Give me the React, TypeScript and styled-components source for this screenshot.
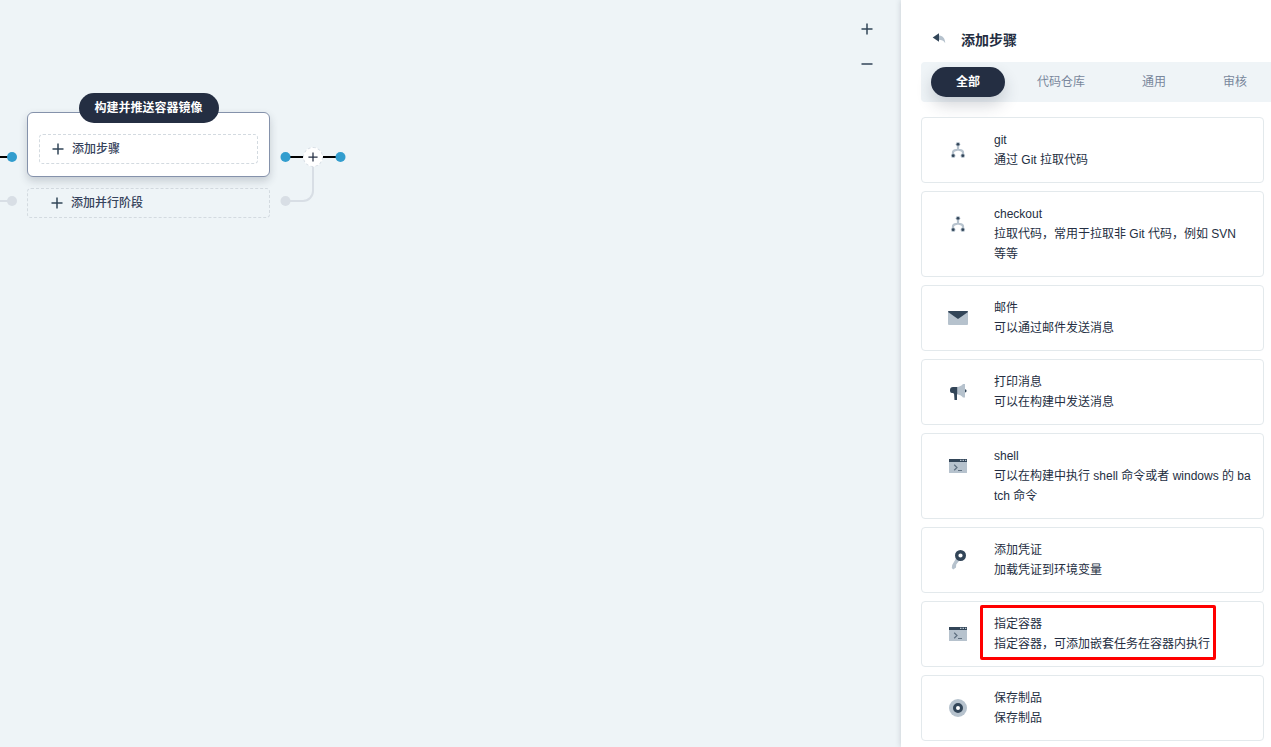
import React from "react";
import styled, { createGlobalStyle, css } from "styled-components";

const color = {
  dark: "#242e42",
  text: "#36435c",
  muted: "#79879c",
  iconDark: "#324558",
  iconLight: "#b6c2cd",
  blue: "#329dce",
  faint: "#d8dee5",
};

const GlobalStyle = createGlobalStyle`
  *, *::before, *::after { box-sizing: border-box; }
  body {
    margin: 0;
    font-family: "Liberation Sans", "Noto Sans CJK SC", sans-serif;
    font-size: 12px;
    line-height: 20px;
    color: ${color.dark};
  }
  button { font: inherit; color: inherit; border: 0; background: none; padding: 0; cursor: pointer; }
  svg { display: block; flex: none; }
`;

const Page = styled.div`
  display: grid;
  grid-template-columns: minmax(0, 1fr) 370px;
  min-height: 100vh;
  overflow: hidden;
`;

/* ---- pipeline canvas ---- */

const Canvas = styled.main`
  position: relative;
  padding-top: 112px;
  background: #eef4f7;
`;

const ZoomControls = styled.div`
  position: absolute;
  top: 19px;
  right: 24px;
  display: flex;
  flex-direction: column;
  gap: 15px;
`;

const ZoomButton = styled.button`
  display: grid;
  place-items: center;
  width: 20px;
  height: 20px;
`;

const StageRow = styled.div`
  display: flex;
  align-items: flex-start;
`;

const StageColumn = styled.div`
  display: flex;
  flex-direction: column;
  gap: 11px;
  width: 243px;
`;

const StageCard = styled.section`
  position: relative;
  padding: 21px 11px 12px;
  border: 1px solid #8592ab;
  border-radius: 6px;
  background: #fff;
  box-shadow: 0 4px 8px rgba(36, 46, 66, 0.2);
`;

const StageName = styled.h2`
  position: absolute;
  top: -20px;
  left: 50%;
  transform: translateX(-50%);
  margin: 0;
  padding: 5px 16px;
  border-radius: 15px;
  background: ${color.dark};
  color: #fff;
  font-size: 12px;
  font-weight: 700;
  line-height: 20px;
  white-space: nowrap;
`;

const DashedButton = styled.button<{ $inset?: boolean }>`
  display: flex;
  align-items: center;
  gap: 8px;
  width: 100%;
  height: 30px;
  padding: 0 ${(p) => (p.$inset ? 12 : 23)}px;
  border: 1px dashed #d3dae0;
  border-radius: 4px;
  color: ${color.text};
  font-weight: 500;
`;

const Connector = styled.div`
  position: relative;
`;

const InsertButton = styled.button`
  position: absolute;
  top: 35px;
  left: 33px;
  display: grid;
  place-items: center;
  width: 20px;
  height: 20px;
  border: 1px dashed #d8dee5;
  border-radius: 50%;
  background: #fff;
`;

/* ---- side panel ---- */

const Panel = styled.aside`
  position: relative;
  min-width: 0;
  padding: 30px 0 5px 20px;
  background: #fff;
  box-shadow: 0 0 6px rgba(36, 46, 66, 0.2);
  overflow: clip;
  overflow-clip-margin: 8px;
`;

const PanelHeader = styled.header`
  display: flex;
  align-items: center;
  gap: 14px;
  height: 20px;
  margin-bottom: 12px;
  padding-left: 10px;
`;

const BackButton = styled.button`
  width: 16px;
  height: 20px;
`;

const PanelTitle = styled.h1`
  margin: 0;
  font-size: 14px;
  font-weight: 700;
  line-height: 20px;
`;

const Tabs = styled.nav`
  display: flex;
  align-items: center;
  gap: 7px;
  height: 40px;
  margin-bottom: 15px;
  padding-left: 10px;
  border-radius: 4px 0 0 4px;
  background: #eff4f7;
`;

const Tab = styled.button<{ $active?: boolean }>`
  flex: none;
  height: 30px;
  padding: 0 25px;
  border-radius: 15px;
  color: ${color.muted};
  ${(p) =>
    p.$active &&
    css`
      background: ${color.dark};
      color: #fff;
      font-weight: 700;
      box-shadow: 0 8px 16px rgba(36, 46, 66, 0.2);
    `}
`;

const StepList = styled.ul`
  display: flex;
  flex-direction: column;
  gap: 8px;
  margin: 0;
  padding: 0 7px 0 0;
  list-style: none;
`;

const StepCard = styled.li`
  position: relative;
  display: flex;
  align-items: flex-start;
  padding: 12px 12px 12px 0;
  border: 1px solid #e3e9ec;
  border-radius: 4px;
  background: #fff;
`;

const StepIcon = styled.div`
  display: grid;
  place-items: center;
  flex: none;
  width: 72px;
  height: 40px;
`;

const StepText = styled.div`
  flex: 1;
  min-width: 0;
  word-break: break-all;
`;

const StepLine = styled.p`
  margin: 0;
`;

const Highlight = styled.div`
  position: absolute;
  top: 3px;
  left: 58px;
  width: 236px;
  height: 55px;
  border: 3px solid #f00;
  border-radius: 2px;
  pointer-events: none;
`;

/* ---- drawings ---- */

const Plus = ({ size = 12, stroke = color.iconDark }: { size?: number; stroke?: string }) => (
  <svg width={size} height={size} viewBox="0 0 12 12" stroke={stroke} strokeWidth="1.5" aria-hidden="true">
    <path d="M6 .5v11M.5 6h11" />
  </svg>
);

const Minus = () => (
  <svg width="12" height="12" viewBox="0 0 12 12" stroke={color.iconDark} strokeWidth="1.5" aria-hidden="true">
    <path d="M.5 6h11" />
  </svg>
);

const BackIcon = () => (
  <svg width="16" height="16" viewBox="0 0 16 16" aria-hidden="true">
    <path d="M7.5 3.400c4 0 6.700 2.600 6.700 7.800-1.500-2.400-3.400-3.400-6.700-3.400z" fill={color.iconLight} />
    <path d="M1.700 5.500 8 1.200v8.600z" fill={color.iconDark} />
  </svg>
);

const GitIcon = () => (
  <svg width="20" height="20" viewBox="0 0 20 20" aria-hidden="true">
    <path d="M10 5v4.500M5 15.500v-3c0-1.500 1-2 2.500-2.300L10 9.500l2.500.7c1.500.3 2.500.8 2.500 2.300v3" fill="none" stroke={color.iconLight} strokeWidth="2.200" />
    {[[10, 4.3], [5.2, 15.7], [14.8, 15.7]].map(([x, y]) => (
      <g key={x}>
        <circle cx={x} cy={y} r="2.300" fill={color.iconLight} />
        <circle cx={x} cy={y} r="1.400" fill={color.iconDark} />
      </g>
    ))}
  </svg>
);

const MailIcon = () => (
  <svg width="20" height="20" viewBox="0 0 20 20" aria-hidden="true">
    <rect y="3" width="20" height="14" rx="1" fill={color.iconLight} />
    <path d="M1 3h18a1 1 0 0 1 1 1l-10 7L0 4a1 1 0 0 1 1-1z" fill={color.iconDark} />
  </svg>
);

const MegaphoneIcon = () => (
  <svg width="20" height="20" viewBox="0 0 20 20" aria-hidden="true">
    <path d="M9 5c2.500-.2 4.500-1.300 6-3h2v13.500h-2c-1.500-1.700-3.500-2.900-6-3.200z" fill={color.iconLight} />
    <path d="M17 7.200a1.600 1.600 0 0 1 0 3.200zM9.200 5v7.300H9V18H6.500l-.4-5.700c-.2-1-.8-1.300-2.100-1.300a2 2 0 0 1-2-2V8c0-2 1-3 3-3z" fill={color.iconDark} />
  </svg>
);

const ShellIcon = () => (
  <svg width="20" height="20" viewBox="0 0 20 20" aria-hidden="true">
    <rect x="1" y="3" width="18" height="14" rx=".5" fill={color.iconLight} />
    <rect x="1" y="3" width="18" height="3" fill={color.iconDark} />
    <path d="M12 3.800h1.500v1.300H12zM14.500 3.800H16v1.300h-1.500zM17 3.800h1.300v1.300H17z" fill={color.iconLight} />
    <path d="m6.200 8.800 2.800 2.700-2.800 2.700M10 14.500h4" fill="none" stroke="#5f7080" strokeWidth="1.200" />
  </svg>
);

const KeyIcon = () => (
  <svg width="20" height="20" viewBox="0 0 20 20" aria-hidden="true">
    <path d="m8 8.500 3 2.500-2.800 3.500-.2 3L5.200 19.500 3.800 18l.4-3z" fill={color.iconLight} />
    <circle cx="12.500" cy="5.500" r="3.800" fill="#fff" stroke={color.iconDark} strokeWidth="3.400" />
  </svg>
);

const DiscIcon = () => (
  <svg width="20" height="20" viewBox="0 0 20 20" aria-hidden="true">
    <circle cx="10" cy="10" r="9" fill={color.iconLight} />
    <circle cx="10" cy="10" r="3.500" fill="#fff" stroke={color.iconDark} strokeWidth="3" />
  </svg>
);

const IncomingLines = () => (
  <svg width="27" height="106" viewBox="0 0 27 106" aria-hidden="true">
    <path d="M0 45h10" stroke="#000" strokeWidth="2" />
    <path d="M0 89h10" stroke={color.faint} strokeWidth="2" />
    <circle cx="12" cy="45" r="5" fill={color.blue} />
    <circle cx="12" cy="89" r="5" fill={color.faint} />
  </svg>
);

const OutgoingLines = () => (
  <svg width="80" height="106" viewBox="0 0 80 106" aria-hidden="true">
    <path d="M15 45h18M53 45h16" stroke="#000" strokeWidth="2" />
    <path d="M43 54v25a10 10 0 0 1-10 10H17" fill="none" stroke={color.faint} strokeWidth="2" />
    <circle cx="15.500" cy="45" r="5" fill={color.blue} />
    <circle cx="70.500" cy="45" r="5" fill={color.blue} />
    <circle cx="15.500" cy="89" r="5" fill={color.faint} />
  </svg>
);

type Step = { title: string; desc: string; Icon: () => React.JSX.Element; highlighted?: boolean };

const steps: Step[] = [
  { title: "git", desc: "通过 Git 拉取代码", Icon: GitIcon },
  { title: "checkout", desc: "拉取代码，常用于拉取非 Git 代码，例如 SVN 等等", Icon: GitIcon },
  { title: "邮件", desc: "可以通过邮件发送消息", Icon: MailIcon },
  { title: "打印消息", desc: "可以在构建中发送消息", Icon: MegaphoneIcon },
  { title: "shell", desc: "可以在构建中执行 shell 命令或者 windows 的 batch 命令", Icon: ShellIcon },
  { title: "添加凭证", desc: "加载凭证到环境变量", Icon: KeyIcon },
  { title: "指定容器", desc: "指定容器，可添加嵌套任务在容器内执行", Icon: ShellIcon, highlighted: true },
  { title: "保存制品", desc: "保存制品", Icon: DiscIcon },
];

const tabs = ["全部", "代码仓库", "通用", "审核"];

export default function App() {
  return (
    <>
      <GlobalStyle />
      <Page lang="zh-CN">
        <Canvas>
          <StageRow>
            <IncomingLines />
            <StageColumn>
              <StageCard>
                <StageName>构建并推送容器镜像</StageName>
                <DashedButton $inset>
                  <Plus />
                  添加步骤
                </DashedButton>
              </StageCard>
              <DashedButton>
                <Plus />
                添加并行阶段
              </DashedButton>
            </StageColumn>
            <Connector>
              <OutgoingLines />
              <InsertButton aria-label="添加阶段">
                <Plus size={10} stroke={color.dark} />
              </InsertButton>
            </Connector>
          </StageRow>
          <ZoomControls>
            <ZoomButton aria-label="放大">
              <Plus />
            </ZoomButton>
            <ZoomButton aria-label="缩小">
              <Minus />
            </ZoomButton>
          </ZoomControls>
        </Canvas>
        <Panel>
          <PanelHeader>
            <BackButton aria-label="返回">
              <BackIcon />
            </BackButton>
            <PanelTitle>添加步骤</PanelTitle>
          </PanelHeader>
          <Tabs>
            {tabs.map((name, i) => (
              <Tab key={name} $active={i === 0}>
                {name}
              </Tab>
            ))}
          </Tabs>
          <StepList>
            {steps.map(({ title, desc, Icon, highlighted }) => (
              <StepCard key={title}>
                <StepIcon>
                  <Icon />
                </StepIcon>
                <StepText>
                  <StepLine>{title}</StepLine>
                  <StepLine>{desc}</StepLine>
                </StepText>
                {highlighted && <Highlight />}
              </StepCard>
            ))}
          </StepList>
        </Panel>
      </Page>
    </>
  );
}
